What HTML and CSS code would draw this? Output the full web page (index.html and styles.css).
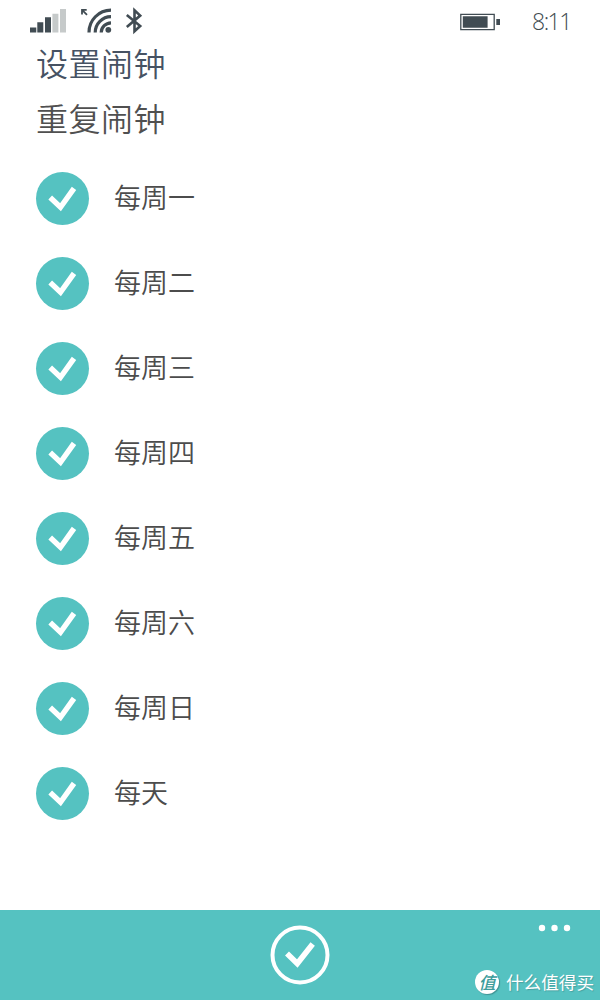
FILE: index.html
```html
<!DOCTYPE html>
<html lang="zh-CN">
<head>
<meta charset="utf-8">
<title>设置闹钟</title>
<link rel="stylesheet" href="styles.css">
</head>
<body>
<svg class="defs" aria-hidden="true"><symbol id="tick" viewBox="0 0 53 53"><path d="M14.2 25.6 24.5 35.2 38 16.4" fill="none" stroke="#fff" stroke-width="5.4"/></symbol></svg>
<div class="screen">
  <header class="status">
    <svg class="status-left" viewBox="0 0 140 40">
      <path d="M10 27.5h6.3v5H10zM17.3 22.3h6v10.2h-6zM25 17.3h6v15.2h-6z" fill="#414c53"/>
      <path d="M32.4 13.8h6v18.7h-6zM40 9h6v23.5h-6z" fill="#c6caca"/>
      <g fill="none" stroke="#414c53">
        <path d="M69 32.5A22 22 0 0 1 91 10.2M75.2 32.5A16 16 0 0 1 91 16.6M81.2 32.5A10 10 0 0 1 91 22.8" stroke-width="3.2"/>
        <path d="M62 14.5V9.8h4.7M62 9.8l5 5" stroke-width="1.8"/>
        <path d="M106.8 15 120.2 26l-5.7 5.3V10.3l5.7 5.3-13.4 11.4" stroke-width="2.6"/>
      </g>
      <circle cx="88.3" cy="29.8" r="2.9" fill="#414c53"/>
    </svg>
    <div class="status-right">
      <svg class="battery" viewBox="0 0 42 18"><path d="M.8 1.3h33.4v15.4H.8z" fill="#fff" stroke="#414c53" stroke-width="1.3"/><path d="M2.8 3.3h24.8v11.4H2.8zM36.3 6h3.7v6h-3.7z" fill="#414c53"/></svg>
      <span class="clock">8:11</span>
    </div>
  </header>
  <main class="content">
    <h1 class="title">设置闹钟</h1>
    <h2 class="subtitle">重复闹钟</h2>
    <ul class="days">
      <li class="day"><span class="check"><svg><use href="#tick"/></svg></span><span class="label">每周一</span></li>
      <li class="day"><span class="check"><svg><use href="#tick"/></svg></span><span class="label">每周二</span></li>
      <li class="day"><span class="check"><svg><use href="#tick"/></svg></span><span class="label">每周三</span></li>
      <li class="day"><span class="check"><svg><use href="#tick"/></svg></span><span class="label">每周四</span></li>
      <li class="day"><span class="check"><svg><use href="#tick"/></svg></span><span class="label">每周五</span></li>
      <li class="day"><span class="check"><svg><use href="#tick"/></svg></span><span class="label">每周六</span></li>
      <li class="day"><span class="check"><svg><use href="#tick"/></svg></span><span class="label">每周日</span></li>
      <li class="day"><span class="check"><svg><use href="#tick"/></svg></span><span class="label">每天</span></li>
    </ul>
  </main>
  <footer class="appbar">
    <svg class="confirm" viewBox="0 0 60 60"><circle cx="30" cy="30" r="27.5" fill="none" stroke="#fff" stroke-width="4"/><path d="M17 28.4 27.3 38.5 42.7 19" fill="none" stroke="#fff" stroke-width="5.6"/></svg>
    <svg class="more" viewBox="0 0 34 8"><g fill="#fff"><circle cx="4" cy="4" r="3.2"/><circle cx="16.5" cy="4" r="3.2"/><circle cx="29" cy="4" r="3.2"/></g></svg>
    <div class="watermark"><span class="mark">值</span><span>什么值得买</span></div>
  </footer>
</div>
</body>
</html>
```
FILE: styles.css
```css
body { margin: 0; background: #fff; }
.defs { position: absolute; width: 0; height: 0; }
.screen {
  width: 600px; height: 1000px; display: flex; flex-direction: column;
  font-family: "Noto Sans CJK SC", sans-serif; font-weight: 350; overflow: hidden;
}
.status { height: 40px; display: flex; justify-content: space-between; padding: 0 30px 0 20px; }
.status-left { width: 140px; height: 40px; }
.status-right { display: flex; align-items: center; gap: 30px; padding-top: 3px; }
.battery { width: 42px; height: 18px; }
.clock { width: 38px; font: 300 23px/40px "Open Sans", sans-serif; color: #414b50; letter-spacing: -1.5px; white-space: nowrap; padding-bottom: 2px; }
.content { flex: 1; padding-left: 36px; }
.title, .subtitle { margin: 0; font-size: 32px; line-height: 55px; font-weight: 350; letter-spacing: .5px; }
.title { color: #465263; margin-top: -5px; }
.subtitle { color: #505050; }
.days { list-style: none; margin: 27px 0 0; padding: 0; display: grid; grid-auto-rows: 53px; row-gap: 32px; }
.day { display: flex; align-items: center; gap: 25px; }
.check { width: 53px; height: 53px; border-radius: 50%; background: #55c2c1; }
.check svg { display: block; width: 53px; height: 53px; }
.label { font-size: 27px; line-height: 40px; color: #4c4c4c; padding-bottom: 4px; }
.appbar { position: relative; height: 90px; background: #55c2c1; display: flex; justify-content: center; align-items: center; }
.confirm { width: 60px; height: 60px; }
.more { position: absolute; right: 28px; top: 14px; width: 34px; height: 8px; }
.watermark {
  position: absolute; right: 6px; bottom: 5px; display: flex; align-items: center; gap: 7px;
  color: #fff; font-size: 17.6px; line-height: 26px; font-weight: 400; text-shadow: 1px 1px 1px #48a1a1;
}
.mark {
  width: 24px; height: 24px; border-radius: 50%; background: #fff; color: #3c9c9b; font-size: 17px;
  line-height: 23px; text-align: center; font-weight: 500; font-style: italic; text-shadow: none; box-shadow: 1px 1px 1px #3f9292;
}
```
